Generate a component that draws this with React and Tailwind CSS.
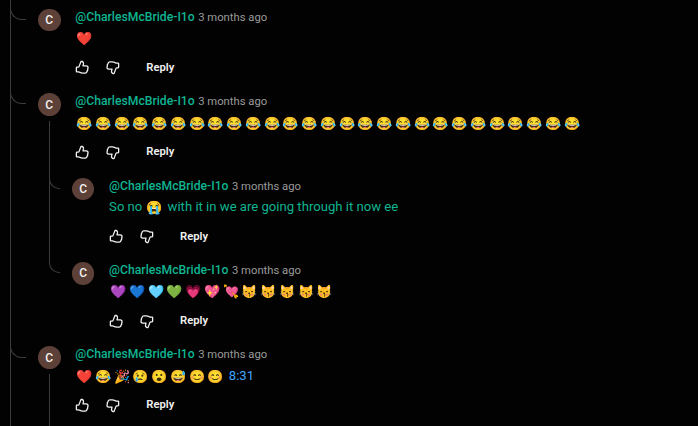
const AUTHOR = "@CharlesMcBride-I1o";

const repeat = (emoji, count) => Array.from({ length: count }, () => emoji);

function ThumbIcon({ down = false }) {
  return (
    <svg
      viewBox="0 0 24 24"
      className={down ? "size-[15px] rotate-180" : "size-[15px]"}
      fill="none"
      stroke="currentColor"
      strokeWidth="2.1"
      strokeLinejoin="round"
    >
      <path d="M9.6 2.2l1.6.2a3 3 0 0 1 2.4 3.5L12.8 9.4H18a2.7 2.7 0 0 1 2.8 3.3q-.1.9-.6 1.7.4 1.2 0 2.2-.4.9-1 1.4a3 3 0 0 1-2.8 2.9h-3.6a11 11 0 0 1-5-1.1l-.8-.3a3 3 0 0 0-1.4-.4H3a.8.8 0 0 1-.8-.8V12.3a.8.8 0 0 1 .8-.8h1.9a2 2 0 0 0 1.7-1.3z" />
    </svg>
  );
}

function Emoji({ children }) {
  return (
    <span className="mx-[1.875px] inline-flex w-[15px] shrink-0 justify-center pt-px text-[13px]">
      {children}
    </span>
  );
}

function Comment({ children }) {
  return (
    <div className="flex h-[84.375px] pt-[8.9px]">
      <div className="mr-[14.8px] flex size-[22.5px] shrink-0 items-center justify-center rounded-full bg-[#5d4037] text-[12px] font-medium text-[#f1f1f1]">
        C
      </div>
      <div>
        <div className="flex items-baseline gap-[3.5px] text-[12.19px] leading-[16.875px]">
          <span className="font-medium text-[#0fb491]">{AUTHOR}</span>
          <span className="text-[11.25px] text-[#9a9a9a]">3 months ago</span>
        </div>
        <div className="mt-[2.9px] flex h-[18.75px] items-center whitespace-pre text-[13.125px] leading-[18.75px] text-[#0fb491]">
          {children}
        </div>
        <div className="mt-[4.5px] -ml-[7.8px] flex h-[30px] items-center text-[#f1f1f1]">
          <button className="flex size-[30px] items-center justify-center">
            <ThumbIcon />
          </button>
          <button className="flex size-[30px] items-center justify-center">
            <ThumbIcon down />
          </button>
          <button className="ml-[18.8px] pt-[0.9px] text-[11.25px] font-semibold">Reply</button>
        </div>
      </div>
    </div>
  );
}

function Elbow({ children }) {
  return (
    <div className="flex">
      <div className="mr-[12px] -ml-px h-[20px] w-[16px] shrink-0 rounded-bl-[12px] border-b border-l border-[#3c3c3c]" />
      {children}
    </div>
  );
}

export default function App() {
  return (
    <div
      className="h-[426px] w-full overflow-hidden bg-[#020202]"
      style={{ fontFamily: "Roboto, 'Noto Color Emoji', sans-serif" }}
    >
      <div className="ml-[10px] h-full border-l border-[#3c3c3c]">
        <Elbow>
          <Comment>
            <Emoji>❤️</Emoji>
          </Comment>
        </Elbow>
        <Elbow>
          <div>
            <Comment>
              {repeat("😂", 27).map((e, i) => (
                <Emoji key={i}>{e}</Emoji>
              ))}
            </Comment>
            {/* reply thread */}
            <div className="-mt-[48px] ml-[11px] h-[48px] border-l border-[#3c3c3c]" />
            <div className="ml-[11px]">
              <div className="flex border-l border-[#3c3c3c]">
                <div className="mr-[11.8px] -ml-px h-[20px] w-[11px] shrink-0 rounded-bl-[10px] border-b border-l border-[#3c3c3c]" />
                <Comment>
                  So no <Emoji>😭</Emoji> with it in we are going through it now ee
                </Comment>
              </div>
              <div className="flex">
                <div className="mr-[11.8px] h-[20px] w-[11px] shrink-0 rounded-bl-[10px] border-b border-l border-[#3c3c3c]" />
                <Comment>
                  {["💜", "💙", "🩵", "💚", "💗", "💖", "💘", ...repeat("😽", 5)].map((e, i) => (
                    <Emoji key={i}>{e}</Emoji>
                  ))}
                </Comment>
              </div>
            </div>
          </div>
        </Elbow>
        <Elbow>
          <div>
            <Comment>
              {["❤️", "😂", "🎉", "😢", "😮", "😅", "😊", "😊"].map((e, i) => (
                <Emoji key={i}>{e}</Emoji>
              ))}
              <span className="ml-[3.5px] text-[#3ea6ff]">8:31</span>
            </Comment>
            <div className="-mt-[48px] ml-[11px] h-[60px] border-l border-[#3c3c3c]" />
          </div>
        </Elbow>
      </div>
    </div>
  );
}
